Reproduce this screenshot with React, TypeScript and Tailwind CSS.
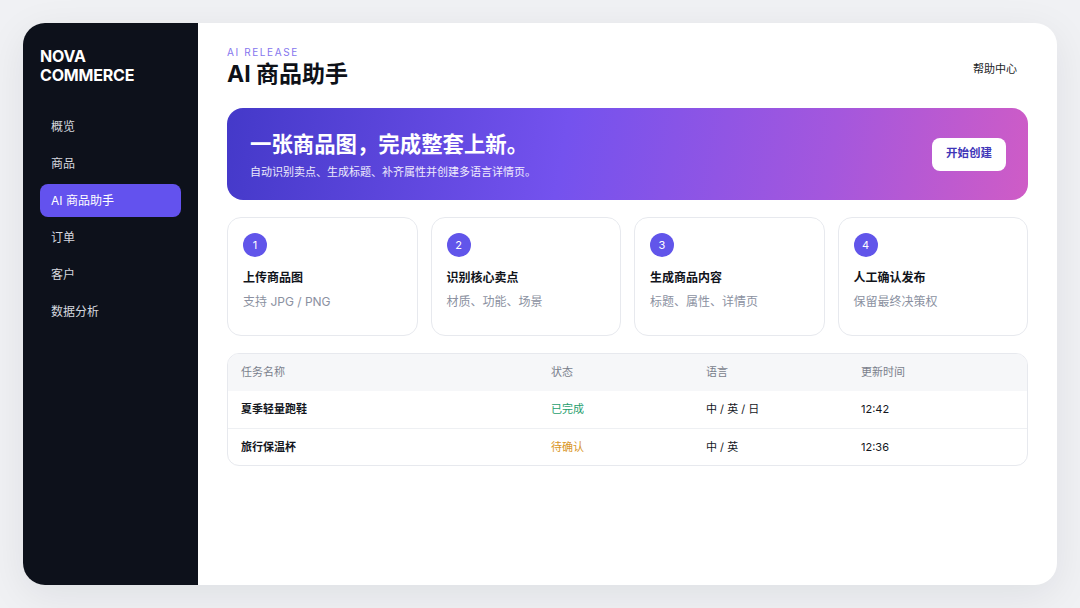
const nav = ['概览', '商品', 'AI 商品助手', '订单', '客户', '数据分析'];

const steps = [
  { n: 1, title: '上传商品图', desc: '支持 JPG / PNG' },
  { n: 2, title: '识别核心卖点', desc: '材质、功能、场景' },
  { n: 3, title: '生成商品内容', desc: '标题、属性、详情页' },
  { n: 4, title: '人工确认发布', desc: '保留最终决策权' },
];

const tasks = [
  { name: '夏季轻量跑鞋', status: '已完成', tone: 'text-[#1f9e6e]', lang: '中 / 英 / 日', time: '12:42' },
  { name: '旅行保温杯', status: '待确认', tone: 'text-[#d9961f]', lang: '中 / 英', time: '12:36' },
];

const cols = 'grid grid-cols-[310px_155px_155px_1fr] px-[13px]';

export default function App() {
  return (
    <div
      className="w-[1080px] h-[608px] bg-[#f0f1f4] p-[23px] flex"
      style={{ fontFamily: 'Inter, "Noto Sans CJK SC", sans-serif' }}
    >
      <div className="flex flex-1 rounded-[22px] overflow-hidden bg-white shadow-[0_10px_40px_rgba(15,23,42,0.08)]">
        {/* Sidebar */}
        <aside className="w-[175px] bg-[#0d111b] px-[17px] pt-[24px] flex flex-col">
          <div className="text-white font-bold text-[16px] leading-[19px] tracking-[-0.2px]">
            NOVA
            <br />
            COMMERCE
          </div>
          <nav className="mt-[25px] flex flex-col gap-[4px]">
            {nav.map((item) => (
              <div
                key={item}
                className={
                  item === 'AI 商品助手'
                    ? 'h-[33px] rounded-[8px] bg-[#6352ee] text-white text-[12px] flex items-center px-[11px]'
                    : 'h-[33px] rounded-[8px] text-[#d5d8df] text-[12px] flex items-center px-[11px]'
                }
              >
                {item}
              </div>
            ))}
          </nav>
        </aside>

        {/* Main */}
        <main className="flex-1 px-[29px] pt-[22px]">
          <header className="flex items-start justify-between">
            <div>
              <div className="text-[10px] tracking-[1.6px] text-[#8576ee] leading-[14px]">AI RELEASE</div>
              <h1 className="text-[23px] font-bold text-[#0e1118] leading-[30px]">AI 商品助手</h1>
            </div>
            <div className="text-[11px] text-[#1b1e26] mt-[16px] mr-[11px]">帮助中心</div>
          </header>

          {/* Banner */}
          <section className="mt-[19px] h-[92px] rounded-[16px] bg-[linear-gradient(100deg,#4439c9_0%,#7452ee_42%,#a457dd_75%,#cf5cc6_100%)] flex items-center justify-between pl-[23px] pr-[22px]">
            <div>
              <h2 className="text-white text-[21.4px] font-bold leading-[28px]">一张商品图，完成整套上新。</h2>
              <p className="text-white/90 text-[11px] mt-[7px] leading-[14px]">
                自动识别卖点、生成标题、补齐属性并创建多语言详情页。
              </p>
            </div>
            <button className="h-[33px] px-[14px] rounded-[8px] bg-white text-[#3f36b8] text-[11.5px] font-semibold">
              开始创建
            </button>
          </section>

          {/* Steps */}
          <section className="mt-[17px] grid grid-cols-4 gap-[13px]">
            {steps.map((s) => (
              <div key={s.n} className="h-[119px] rounded-[14px] border border-[#e7e9ee] px-[15px] pt-[15px]">
                <div className="w-[24px] h-[24px] rounded-full bg-[#6155ea] text-white text-[11px] flex items-center justify-center">
                  {s.n}
                </div>
                <div className="mt-[13px] text-[12px] font-bold text-[#11141b] leading-[16px]">{s.title}</div>
                <div className="mt-[8px] text-[12px] text-[#8b91a1] leading-[16px]">{s.desc}</div>
              </div>
            ))}
          </section>

          {/* Tasks */}
          <section className="mt-[17px] rounded-[12px] border border-[#e7e9ee] overflow-hidden">
            <div className={`${cols} h-[37px] items-center bg-[#f6f7f9] text-[11px] text-[#7a7f8c]`}>
              <div>任务名称</div>
              <div>状态</div>
              <div>语言</div>
              <div>更新时间</div>
            </div>
            {tasks.map((t, i) => (
              <div
                key={t.name}
                className={`${cols} h-[37px] items-center text-[11px] text-[#14171e] ${i > 0 ? 'border-t border-[#eef0f3]' : ''}`}
              >
                <div className="font-bold">{t.name}</div>
                <div className={t.tone}>{t.status}</div>
                <div>{t.lang}</div>
                <div>{t.time}</div>
              </div>
            ))}
          </section>
        </main>
      </div>
    </div>
  );
}
